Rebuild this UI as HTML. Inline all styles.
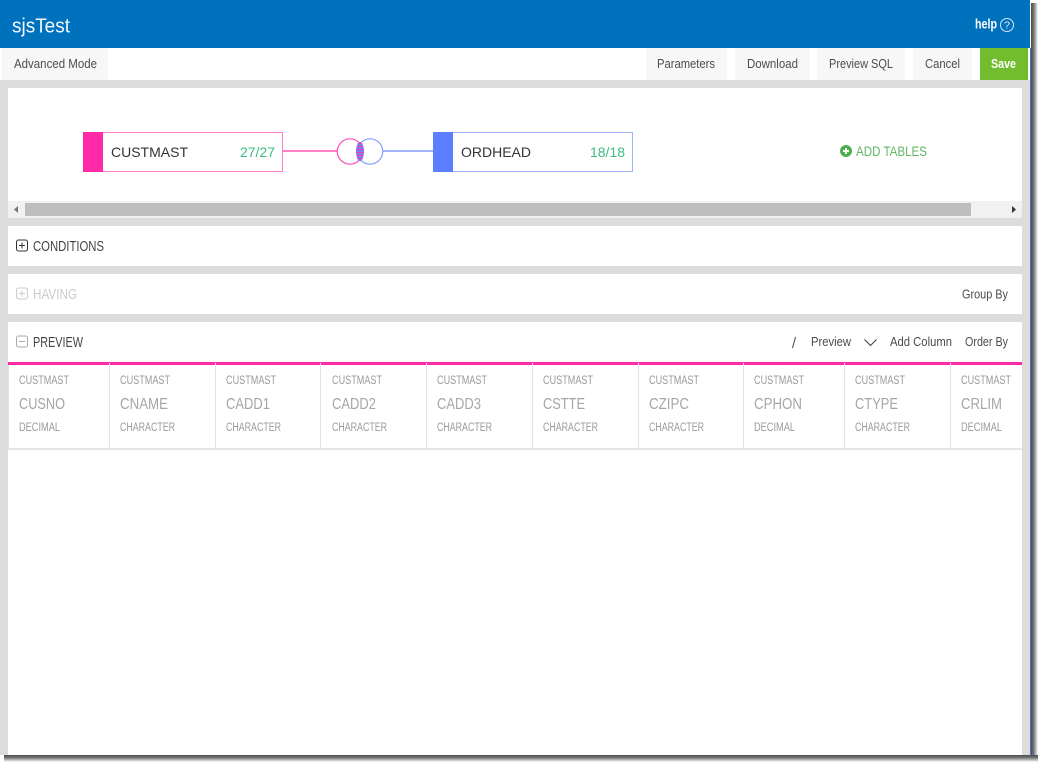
<!DOCTYPE html>
<html><head><meta charset="utf-8"><title>sjsTest</title>
<style>
html,body{margin:0;padding:0;background:#fff;width:1040px;height:764px;overflow:hidden}
svg{display:block;position:absolute;left:0;top:0}
text{font-family:"Liberation Sans",sans-serif;fill:#555}
.t{font-size:13px;fill:#4d4d4d}
.h{font-size:14.5px}
.a{font-size:12px;fill:#999}
.c{font-size:11.5px;fill:#999}
.b{font-size:15.5px;fill:#a6a6a6}
</style></head><body>
<svg width="1040" height="764" viewBox="0 0 1040 764" xmlns="http://www.w3.org/2000/svg">
<defs>
<linearGradient id="sr" x1="0" x2="1" y1="0" y2="0"><stop offset="0" stop-color="#4a4a4a"/><stop offset=".4" stop-color="#777"/><stop offset="1" stop-color="#fff"/></linearGradient>
<linearGradient id="sb" x1="0" x2="0" y1="0" y2="1"><stop offset="0" stop-color="#4a4a4a"/><stop offset=".4" stop-color="#777"/><stop offset="1" stop-color="#fff"/></linearGradient>
<clipPath id="lens"><ellipse cx="360" cy="151.500" rx="4" ry="9.500"/></clipPath>
</defs>
<rect x="1031" y="3" width="7" height="759" fill="url(#sr)"/>
<rect x="4" y="755" width="1034" height="7" fill="url(#sb)"/>
<rect x="0" y="0" width="1030" height="755" fill="#dcdcdc"/>
<rect x="1030" y="48" width="1" height="708" fill="#4472c4"/>
<rect x="0" y="0" width="1030" height="48" fill="#0071bc"/>
<rect x="0" y="48" width="1030" height="32" fill="#fff"/>
<text x="12" y="32.500" font-size="20.500" textLength="58" lengthAdjust="spacingAndGlyphs" style="fill:#f2f7fb">sjsTest</text>
<text x="975" y="28.500" font-size="13.500" font-weight="700" textLength="22" lengthAdjust="spacingAndGlyphs" style="fill:#fff">help</text>
<circle cx="1007" cy="25" r="6.500" fill="none" stroke="#d5e6f3" stroke-width="1"/>
<text x="1004" y="28.500" font-size="10" textLength="6" lengthAdjust="spacingAndGlyphs" style="fill:#e5f0f8">?</text>

<rect x="2" y="48" width="106" height="32" fill="#f7f7f7"/>
<rect x="646" y="48" width="81" height="32" fill="#f7f7f7"/>
<rect x="735" y="48" width="75" height="32" fill="#f7f7f7"/>
<rect x="817" y="48" width="88" height="32" fill="#f7f7f7"/>
<rect x="913" y="48" width="59" height="32" fill="#f7f7f7"/>
<rect x="980" y="48" width="48" height="32" fill="#72bd2d"/>
<text class="t" x="14" y="68" textLength="83" lengthAdjust="spacingAndGlyphs">Advanced Mode</text>
<text class="t" x="657" y="68" textLength="58" lengthAdjust="spacingAndGlyphs">Parameters</text>
<text class="t" x="747" y="68" textLength="51" lengthAdjust="spacingAndGlyphs">Download</text>
<text class="t" x="829" y="68" textLength="64" lengthAdjust="spacingAndGlyphs">Preview SQL</text>
<text class="t" x="925" y="68" textLength="35" lengthAdjust="spacingAndGlyphs">Cancel</text>
<text x="991" y="68" font-size="13" font-weight="700" textLength="25" lengthAdjust="spacingAndGlyphs" style="fill:#fff">Save</text>

<rect x="8" y="88" width="1014" height="130" fill="#fff"/>
<rect x="283" y="150" width="54" height="2" fill="#ff80c8"/>
<rect x="383" y="150" width="50" height="2" fill="#a0b4ff"/>
<rect x="83.500" y="132.500" width="199" height="39" fill="#fff" stroke="#ff80c8"/>
<rect x="83" y="132" width="20" height="40" fill="#ff2aa8"/>
<text x="111" y="157" font-size="14" textLength="77" lengthAdjust="spacingAndGlyphs" style="fill:#333">CUSTMAST</text>
<text x="240" y="157" font-size="14" textLength="35" lengthAdjust="spacingAndGlyphs" style="fill:#3dbb85">27/27</text>
<rect x="433.500" y="132.500" width="199" height="39" fill="#fff" stroke="#a0b4ff"/>
<rect x="433" y="132" width="20" height="40" fill="#5b7fff"/>
<text x="461" y="157" font-size="14" textLength="70" lengthAdjust="spacingAndGlyphs" style="fill:#333">ORDHEAD</text>
<text x="590" y="157" font-size="14" textLength="35" lengthAdjust="spacingAndGlyphs" style="fill:#3dbb85">18/18</text>
<circle cx="350" cy="151.500" r="12.700" fill="#fff" stroke="#ff4db5" stroke-width="1.200"/>
<circle cx="370" cy="151.500" r="12.700" fill="none" stroke="#86a0ff" stroke-width="1.200"/>
<g clip-path="url(#lens)">
<rect x="355" y="141" width="10" height="21" fill="#7b7df0"/>
<path d="M355 143.500h10M355 146.500h10M355 149.500h10M355 152.500h10M355 155.500h10M355 158.500h10" stroke="#f040b0" stroke-width="1.100"/>
</g>
<circle cx="846" cy="151" r="6" fill="#4caf50"/>
<path d="M843 151h6M846 148v6" stroke="#fff" stroke-width="2"/>
<text x="856" y="156" font-size="14" textLength="71" lengthAdjust="spacingAndGlyphs" style="fill:#5fb665">ADD TABLES</text>
<rect x="8" y="201" width="1014" height="17" fill="#f1f1f1"/>
<rect x="25" y="203" width="946" height="13" fill="#bdbdbd"/>
<path d="M18 206v7l-4-3.500z" fill="#777"/>
<path d="M1012 206v7l4-3.500z" fill="#333"/>

<rect x="8" y="226" width="1014" height="40" fill="#fff"/>
<rect x="16.500" y="240" width="11" height="11" rx="2" fill="none" stroke="#333"/>
<path d="M19 245.500h6M22 242.500v6" stroke="#333"/>
<text class="h" x="33" y="251" textLength="71" lengthAdjust="spacingAndGlyphs" style="fill:#444">CONDITIONS</text>

<rect x="8" y="274" width="1014" height="40" fill="#fff"/>
<rect x="16.500" y="288" width="11" height="11" rx="2" fill="none" stroke="#ccc"/>
<path d="M19 293.500h6M22 290.500v6" stroke="#ccc"/>
<text class="h" x="33" y="299" textLength="44" lengthAdjust="spacingAndGlyphs" style="fill:#ccc">HAVING</text>
<text class="t" x="962" y="298.500" textLength="46" lengthAdjust="spacingAndGlyphs">Group By</text>

<rect x="8" y="322" width="1014" height="433" fill="#fff"/>
<rect x="16.500" y="336" width="11" height="11" rx="2" fill="none" stroke="#aaa"/>
<path d="M19 341.500h6" stroke="#aaa"/>
<text class="h" x="33" y="347" textLength="50" lengthAdjust="spacingAndGlyphs" style="fill:#444">PREVIEW</text>
<path d="M795.500 337l-3 11" stroke="#444" stroke-width="1" fill="none"/>
<text class="t" x="811" y="346" textLength="40" lengthAdjust="spacingAndGlyphs">Preview</text>
<path d="M864.500 339.500l6 6 6-6" fill="none" stroke="#444" stroke-width="1.100"/>
<text class="t" x="890" y="346" textLength="62" lengthAdjust="spacingAndGlyphs">Add Column</text>
<text class="t" x="965" y="346" textLength="43" lengthAdjust="spacingAndGlyphs">Order By</text>

<rect x="8" y="362" width="1014" height="3" fill="#ff2aa8"/>
<rect x="8" y="365" width="1" height="85" fill="#e3e3e3"/>
<rect x="109" y="363" width="1" height="85" fill="#e3e3e3"/>
<rect x="215" y="363" width="1" height="85" fill="#e3e3e3"/>
<rect x="320" y="363" width="1" height="85" fill="#e3e3e3"/>
<rect x="426" y="363" width="1" height="85" fill="#e3e3e3"/>
<rect x="532" y="363" width="1" height="85" fill="#e3e3e3"/>
<rect x="638" y="363" width="1" height="85" fill="#e3e3e3"/>
<rect x="743" y="363" width="1" height="85" fill="#e3e3e3"/>
<rect x="844" y="363" width="1" height="85" fill="#e3e3e3"/>
<rect x="950" y="363" width="1" height="85" fill="#e3e3e3"/>
<rect x="8" y="448" width="1014" height="2" fill="#e5e5e5"/>

<text class="a" x="19" y="384" textLength="50" lengthAdjust="spacingAndGlyphs">CUSTMAST</text><text class="b" x="19" y="409" textLength="46" lengthAdjust="spacingAndGlyphs">CUSNO</text><text class="c" x="19" y="431" textLength="41" lengthAdjust="spacingAndGlyphs">DECIMAL</text>
<text class="a" x="120" y="384" textLength="50" lengthAdjust="spacingAndGlyphs">CUSTMAST</text><text class="b" x="120" y="409" textLength="48" lengthAdjust="spacingAndGlyphs">CNAME</text><text class="c" x="120" y="431" textLength="55" lengthAdjust="spacingAndGlyphs">CHARACTER</text>
<text class="a" x="226" y="384" textLength="50" lengthAdjust="spacingAndGlyphs">CUSTMAST</text><text class="b" x="226" y="409" textLength="44" lengthAdjust="spacingAndGlyphs">CADD1</text><text class="c" x="226" y="431" textLength="55" lengthAdjust="spacingAndGlyphs">CHARACTER</text>
<text class="a" x="332" y="384" textLength="50" lengthAdjust="spacingAndGlyphs">CUSTMAST</text><text class="b" x="332" y="409" textLength="44" lengthAdjust="spacingAndGlyphs">CADD2</text><text class="c" x="332" y="431" textLength="55" lengthAdjust="spacingAndGlyphs">CHARACTER</text>
<text class="a" x="437" y="384" textLength="50" lengthAdjust="spacingAndGlyphs">CUSTMAST</text><text class="b" x="437" y="409" textLength="44" lengthAdjust="spacingAndGlyphs">CADD3</text><text class="c" x="437" y="431" textLength="55" lengthAdjust="spacingAndGlyphs">CHARACTER</text>
<text class="a" x="543" y="384" textLength="50" lengthAdjust="spacingAndGlyphs">CUSTMAST</text><text class="b" x="543" y="409" textLength="42" lengthAdjust="spacingAndGlyphs">CSTTE</text><text class="c" x="543" y="431" textLength="55" lengthAdjust="spacingAndGlyphs">CHARACTER</text>
<text class="a" x="649" y="384" textLength="50" lengthAdjust="spacingAndGlyphs">CUSTMAST</text><text class="b" x="649" y="409" textLength="40" lengthAdjust="spacingAndGlyphs">CZIPC</text><text class="c" x="649" y="431" textLength="55" lengthAdjust="spacingAndGlyphs">CHARACTER</text>
<text class="a" x="754" y="384" textLength="50" lengthAdjust="spacingAndGlyphs">CUSTMAST</text><text class="b" x="754" y="409" textLength="48" lengthAdjust="spacingAndGlyphs">CPHON</text><text class="c" x="754" y="431" textLength="41" lengthAdjust="spacingAndGlyphs">DECIMAL</text>
<text class="a" x="855" y="384" textLength="50" lengthAdjust="spacingAndGlyphs">CUSTMAST</text><text class="b" x="855" y="409" textLength="43" lengthAdjust="spacingAndGlyphs">CTYPE</text><text class="c" x="855" y="431" textLength="55" lengthAdjust="spacingAndGlyphs">CHARACTER</text>
<text class="a" x="961" y="384" textLength="50" lengthAdjust="spacingAndGlyphs">CUSTMAST</text><text class="b" x="961" y="409" textLength="41" lengthAdjust="spacingAndGlyphs">CRLIM</text><text class="c" x="961" y="431" textLength="41" lengthAdjust="spacingAndGlyphs">DECIMAL</text>
</svg>
</body></html>
